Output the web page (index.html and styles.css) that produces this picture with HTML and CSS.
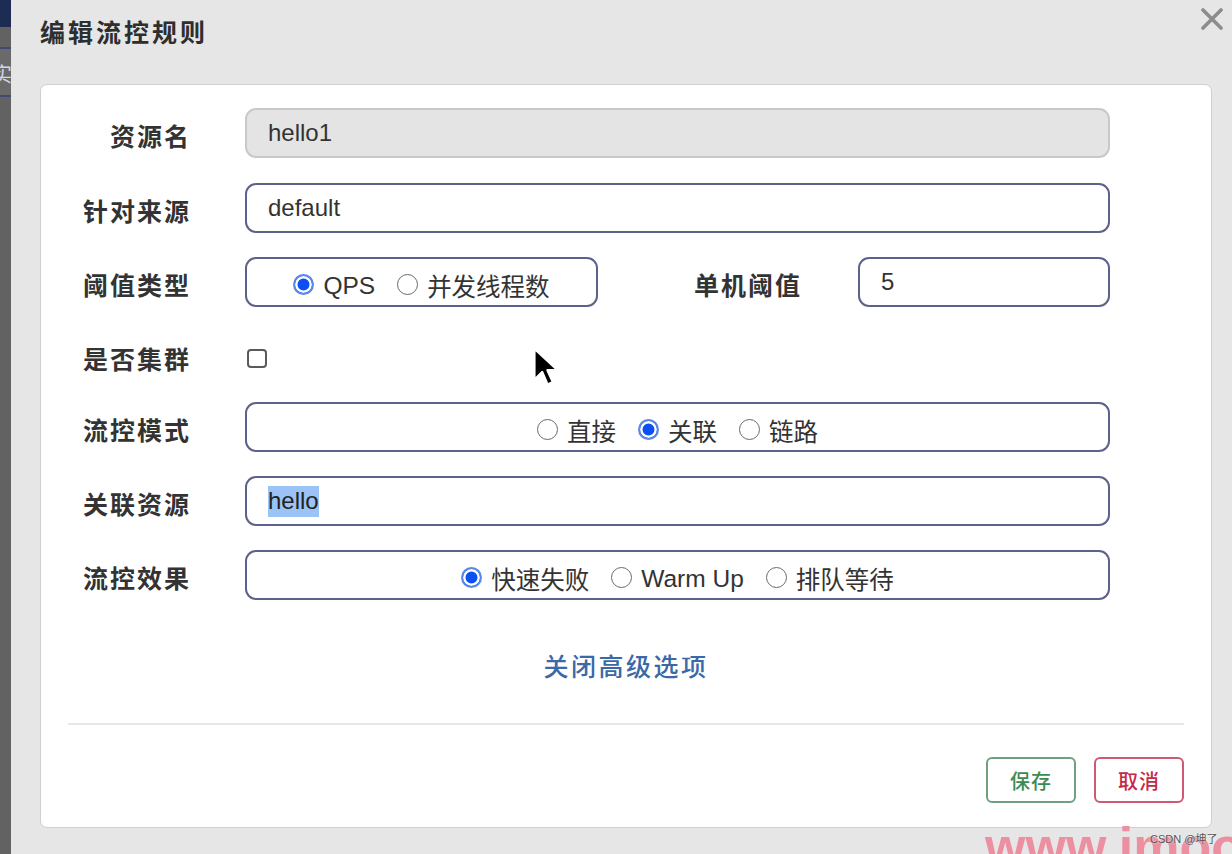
FILE: index.html
```html
<!DOCTYPE html>
<html lang="zh-CN">
<head>
<meta charset="utf-8">
<title>编辑流控规则</title>
<link rel="stylesheet" href="styles.css">
</head>
<body>
<div class="page">
  <aside class="side">
    <div class="side-top"></div>
    <div class="side-item"><span class="side-char">实</span></div>
    <div class="side-rest"></div>
  </aside>
  <main class="modal">
    <header class="modal-head">
      <h1 class="title">编辑流控规则</h1>
      <button class="close" aria-label="关闭">
        <svg width="24" height="22" viewBox="0 0 24 22"><path d="M3 2 L21 20 M21 2 L3 20" stroke="#8c8c8c" stroke-width="3.6" stroke-linecap="round"/></svg>
      </button>
    </header>
    <section class="modal-body">
      <div class="form">
        <div class="row r1">
          <label class="lbl">资源名</label>
          <div class="field disabled">hello1</div>
        </div>
        <div class="row r2">
          <label class="lbl">针对来源</label>
          <div class="field">default</div>
        </div>
        <div class="row r3">
          <label class="lbl">阈值类型</label>
          <div class="field radios short">
            <span class="opt"><span class="radio on"></span>QPS</span>
            <span class="opt"><span class="radio"></span>并发线程数</span>
          </div>
          <label class="lbl lbl-mid">单机阈值</label>
          <div class="field small">5</div>
        </div>
        <div class="row r4">
          <label class="lbl">是否集群</label>
          <span class="checkbox"></span>
        </div>
        <div class="row r5">
          <label class="lbl">流控模式</label>
          <div class="field radios">
            <span class="opt"><span class="radio"></span>直接</span>
            <span class="opt"><span class="radio on"></span>关联</span>
            <span class="opt"><span class="radio"></span>链路</span>
          </div>
        </div>
        <div class="row r6">
          <label class="lbl">关联资源</label>
          <div class="field"><span class="sel">hello</span></div>
        </div>
        <div class="row r7">
          <label class="lbl">流控效果</label>
          <div class="field radios">
            <span class="opt"><span class="radio on"></span>快速失败</span>
            <span class="opt"><span class="radio"></span>Warm Up</span>
            <span class="opt"><span class="radio"></span>排队等待</span>
          </div>
        </div>
      </div>
      <a class="advanced">关闭高级选项</a>
      <footer class="modal-foot">
        <button class="btn btn-save">保存</button>
        <button class="btn btn-cancel">取消</button>
      </footer>
    </section>
  </main>
</div>
<svg class="cursor" width="31" height="46" viewBox="0 0 26 38"><path d="M2 2 L2 28 L8.5 21.5 L13 32 L17.5 30 L13 20 L21.5 20 Z" fill="#000" stroke="#fff" stroke-width="2" stroke-linejoin="round"/></svg>
<div class="watermark">www.imooc</div>
<div class="csdn">CSDN @坤了</div>
</body>
</html>
```

FILE: styles.css
```css
* { box-sizing: border-box; }
html, body {
  margin: 0;
  padding: 0;
  width: 1232px;
  height: 854px;
  overflow: hidden;
  background: #e6e6e6;
  font-family: "Liberation Sans", "Noto Sans CJK SC", sans-serif;
  color: #333;
}
.page {
  display: flex;
  height: 854px;
}
.side {
  width: 11px;
  flex: none;
  background: #626262;
  display: flex;
  flex-direction: column;
  overflow: hidden;
}
.side-top {
  height: 27px;
  background: #1c2c52;
}
.side-item {
  margin-top: 20px;
  height: 50px;
  border-top: 2px solid #3e4a78;
  border-bottom: 2px solid #3e4a78;
  background: #6a6a6a;
}
.side-char {
  display: block;
  margin-left: -8px;
  margin-top: 10px;
  font-size: 20px;
  color: #cfd6e8;
  font-family: "Noto Sans CJK SC", sans-serif;
}
.side-rest { flex: 1; }

.modal {
  flex: 1;
  padding: 0 20px 0 29px;
}
.modal-head {
  height: 84px;
  display: flex;
  align-items: flex-start;
}
.title {
  margin: 17px 0 0 0;
  font-family: "Noto Sans CJK SC", sans-serif;
  font-size: 25px;
  line-height: 28px;
  font-weight: 700;
  letter-spacing: 3px;
  color: #2e2e2e;
}
.close {
  margin: 8px -12px 0 auto;
  padding: 0;
  border: 0;
  background: transparent;
  width: 24px;
  height: 22px;
}
.close svg { display: block; }

.modal-body {
  background: #fff;
  border: 1px solid #cfcfcf;
  border-radius: 7px;
  height: 744px;
  display: flex;
  flex-direction: column;
}
.form {
  padding-top: 23px;
  display: flex;
  flex-direction: column;
}
.row {
  height: 50px;
  display: flex;
  align-items: center;
}
.r1 { margin-bottom: 25px; }
.r2 { margin-bottom: 24px; }
.r3 { margin-bottom: 26px; }
.r4 { margin-bottom: 19px; }
.r5 { margin-bottom: 24px; }
.r6 { margin-bottom: 24px; }
.lbl {
  width: 150px;
  flex: none;
  text-align: right;
  margin-right: 54px;
  padding-top: 3px;
  font-family: "Noto Sans CJK SC", sans-serif;
  font-size: 25px;
  font-weight: 700;
  letter-spacing: 2px;
  color: #333;
}
.r4 .lbl { padding-top: 0; }
.lbl-mid {
  width: 204px;
  margin-right: 56px;
}
.field {
  width: 865px;
  height: 50px;
  border: 2px solid #5e6189;
  border-radius: 11px;
  background: #fff;
  padding: 0 21px;
  display: flex;
  align-items: center;
  font-size: 24px;
  color: #333;
}
.field.disabled {
  background: #e4e4e4;
  border-color: #c9c9c9;
}
.field.short { width: 353px; }
.field.small { width: 252px; }
.sel {
  background: #9cc3f5;
  color: #222;
  padding: 1px 0 2px;
}
.radios {
  justify-content: center;
  gap: 22px;
  padding: 7px 0 0;
}
.opt {
  display: inline-flex;
  align-items: center;
  gap: 9px;
  font-size: 24.5px;
  color: #333;
  font-family: "Liberation Sans", "Noto Sans CJK SC", sans-serif;
}
.radio {
  width: 21px;
  height: 21px;
  border-radius: 50%;
  border: 1.5px solid #6a6a6a;
  background: #fff;
  flex: none;
  margin-top: -3px;
}
.radio.on {
  border: 2px solid #5b86ea;
  background: #0a50f5;
  box-shadow: inset 0 0 0 2.5px #fff;
}
.checkbox {
  width: 20px;
  height: 19px;
  border: 2px solid #5a5a5a;
  border-radius: 4px;
  background: #fff;
  margin-left: 2px;
}
.advanced {
  margin-top: 50px;
  height: 30px;
  line-height: 30px;
  text-align: center;
  font-family: "Noto Sans CJK SC", sans-serif;
  font-size: 25px;
  letter-spacing: 2.5px;
  color: #3b69a8;
  font-weight: 500;
}
.modal-foot {
  margin: 43px 27px 0;
  border-top: 2px solid #e7e7e7;
  padding-top: 32px;
  display: flex;
  justify-content: flex-end;
  gap: 18px;
}
.btn {
  width: 90px;
  height: 46px;
  border-radius: 6px;
  background: #fff;
  font-family: "Noto Sans CJK SC", sans-serif;
  font-size: 20px;
  font-weight: 500;
  letter-spacing: 1px;
  padding: 0;
}
.btn-save {
  border: 2px solid #6f9f7d;
  color: #3d8a52;
}
.btn-cancel {
  border: 2px solid #cc5a71;
  color: #c32a49;
}
.cursor {
  position: absolute;
  left: 532px;
  top: 346px;
}
.watermark {
  position: absolute;
  left: 985px;
  top: 820px;
  font-family: "Liberation Sans", sans-serif;
  font-weight: 700;
  font-size: 52px;
  line-height: 1;
  color: #ec8fa0;
  white-space: nowrap;
}
.csdn {
  position: absolute;
  left: 1150px;
  top: 830px;
  font-family: "Liberation Sans", "Noto Sans CJK SC", sans-serif;
  font-size: 11px;
  color: #555;
  text-shadow: 0 0 2px #fff;
  white-space: nowrap;
}
```
